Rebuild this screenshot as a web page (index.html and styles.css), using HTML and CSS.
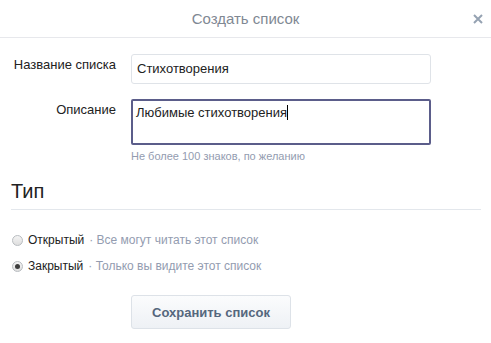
FILE: index.html
```html
<!DOCTYPE html>
<html lang="ru">
<head>
  <meta charset="UTF-8" />
  <title>Создать список</title>
  <link rel="stylesheet" href="styles.css">
</head>
<body>
  <div class="box">
    <div class="box-header">
      <span></span>
      <h1 class="box-title">Создать список</h1>
      <span class="box-close">
        <svg width="10" height="10" viewBox="0 0 10 10"><path d="M1 1L9 9M9 1L1 9" stroke="#95a2b2" stroke-width="2"/></svg>
      </span>
    </div>

    <div class="box-body">
      <div class="form-row">
        <label class="form-label">Название списка</label>
        <div class="form-field">
          <div class="text-input">Стихотворения</div>
        </div>
      </div>

      <div class="form-row">
        <label class="form-label">Описание</label>
        <div class="form-field">
          <div class="text-area">Любимые стихотворения<span class="caret"></span></div>
          <div class="hint">Не более 100 знаков, по желанию</div>
        </div>
      </div>

      <h2 class="section-title">Тип</h2>

      <div class="radios">
        <div class="radio">
          <span class="radio-dot"></span>
          <span class="radio-name">Открытый</span>
          <span class="radio-desc">· Все могут читать этот список</span>
        </div>
        <div class="radio on">
          <span class="radio-dot"></span>
          <span class="radio-name">Закрытый</span>
          <span class="radio-desc">· Только вы видите этот список</span>
        </div>
      </div>

      <div class="actions">
        <button class="btn">Сохранить список</button>
      </div>
    </div>
  </div>
</body>
</html>
```

FILE: styles.css
```css
* {
  margin: 0;
  padding: 0;
  box-sizing: border-box;
}

body {
  background: #fff;
  font-family: 'Liberation Sans', Arial, sans-serif;
  font-size: 13px;
  color: #222;
}

.box-header {
  height: 38px;
  border-bottom: 1px solid #e7e8ec;
  display: grid;
  grid-template-columns: 1fr auto 1fr;
  align-items: center;
}

.box-title {
  font-size: 15px;
  font-weight: normal;
  color: #7f8893;
}

.box-close {
  justify-self: end;
  margin-right: 8px;
  display: flex;
}

.box-body {
  padding: 16px 10px 0 11px;
}

.form-row {
  display: grid;
  grid-template-columns: 105px 300px;
  column-gap: 15px;
  margin-bottom: 15px;
}

.form-label {
  text-align: right;
  padding-top: 3px;
  line-height: 16px;
}

.text-input {
  height: 30px;
  border: 1px solid #dfe3e8;
  border-radius: 3px;
  padding: 0 5px;
  line-height: 28px;
}

.text-area {
  height: 46px;
  border: 2px solid #5b5d8a;
  border-radius: 2px;
  padding: 4px 3px;
  line-height: 16px;
}

.caret {
  display: inline-block;
  width: 1px;
  height: 15px;
  background: #000;
  vertical-align: -3px;
}

.hint {
  margin-top: 5px;
  font-size: 11px;
  color: #939cb0;
}

.section-title {
  font-size: 20px;
  font-weight: normal;
  color: #222;
  margin-top: 18px;
  padding-bottom: 6px;
  border-bottom: 1px solid #e3e7ec;
}

.radios {
  padding-top: 17px;
}

.radio {
  display: flex;
  align-items: center;
  height: 26px;
  gap: 5px;
  padding-left: 1px;
}

.radio-dot {
  width: 11px;
  height: 11px;
  border-radius: 50%;
  border: 1px solid #b8bcc0;
  background: linear-gradient(#f4f4f4, #dedede);
  display: flex;
  align-items: center;
  justify-content: center;
}

.radio.on .radio-dot::after {
  content: '';
  width: 5px;
  height: 5px;
  border-radius: 50%;
  background: #3d3d3d;
}

.radio-name {
  color: #222;
  font-size: 12px;
}

.radio-desc {
  color: #939cb0;
  font-size: 12px;
}

.actions {
  padding: 16px 0 0 120px;
}

.btn {
  width: 160px;
  height: 34px;
  font-family: inherit;
  font-size: 13px;
  font-weight: bold;
  color: #55677d;
  background: linear-gradient(#fbfcfd, #eef1f5);
  border: 1px solid #dde2e8;
  border-radius: 3px;
  cursor: pointer;
}
```
